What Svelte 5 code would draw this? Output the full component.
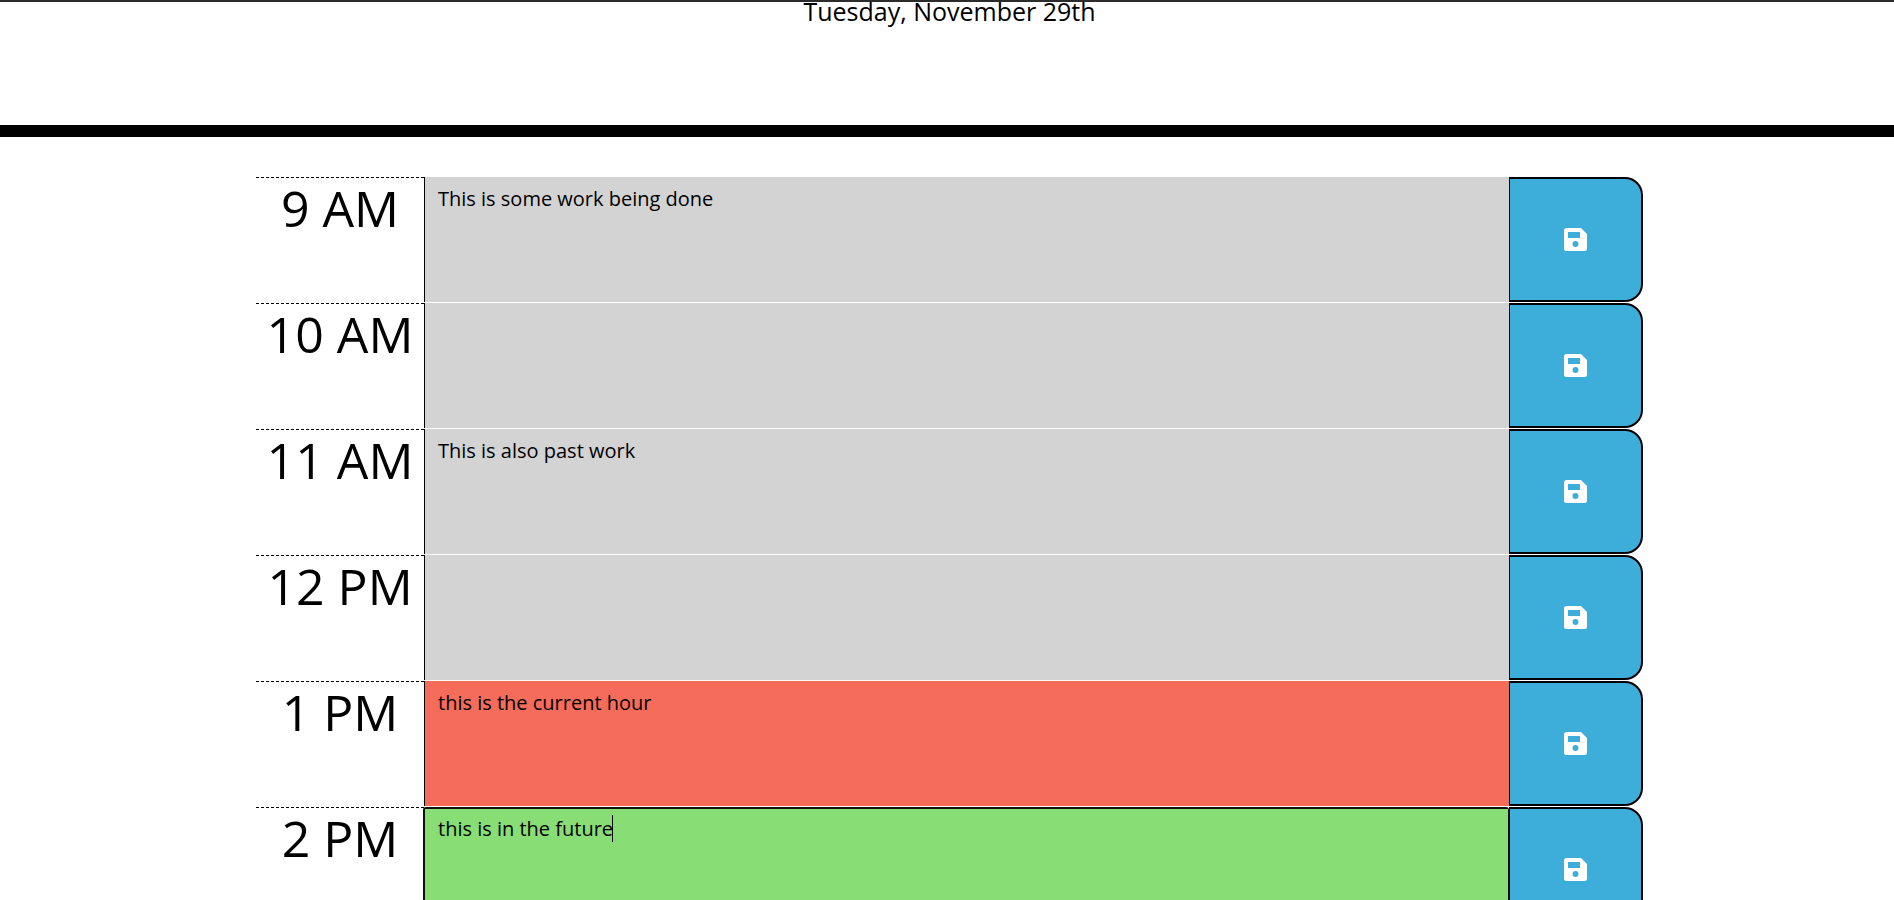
<script>
  const date = 'Tuesday, November 29th';
  let blocks = $state([
    { id: 9, hour: '9 AM', text: 'This is some work being done', when: 'past' },
    { id: 10, hour: '10 AM', text: '', when: 'past' },
    { id: 11, hour: '11 AM', text: 'This is also past work', when: 'past' },
    { id: 12, hour: '12 PM', text: '', when: 'past' },
    { id: 13, hour: '1 PM', text: 'this is the current hour', when: 'present' },
    { id: 14, hour: '2 PM', text: 'this is in the future', when: 'future', active: true }
  ]);
</script>

<header>
  <p>{date}</p>
</header>

<main>
  {#each blocks as block (block.id)}
    <section class="row">
      <label class="hour" for="block-{block.id}">{block.hour}</label>
      <div class="entry" class:active={block.active}>
        <textarea id="block-{block.id}" class={block.when} spellcheck="false" bind:value={block.text}></textarea>
        {#if block.active}<span class="caret"></span>{/if}
      </div>
      <button type="button" aria-label="Save">
        <svg viewBox="0 0 23 23" width="23" height="23" aria-hidden="true">
          <path
            fill="#fff"
            fill-rule="evenodd"
            d="M2.5 0H17L23 6V20.500A2.500 2.500 0 0 1 20.500 23H2.500A2.500 2.500 0 0 1 0 20.500V2.500A2.500 2.500 0 0 1 2.500 0ZM4 4V10H16V4ZM11.500 13A3 3 0 1 0 11.500 19A3 3 0 1 0 11.500 13Z"
          />
        </svg>
      </button>
    </section>
  {/each}
</main>

<style>
  :global(html) {
    scrollbar-width: none;
  }

  :global(body) {
    height: 100vh;
    overflow: hidden;
    background: #fff;
    color: #000;
    font-family: 'Open Sans', sans-serif;
    font-size: 20px;
  }

  header {
    box-sizing: border-box;
    height: 137px;
    padding-left: 5px;
    border-top: 2px solid #2b2b2b;
    border-bottom: 12px solid #000;
    text-align: center;
  }

  header p {
    margin: 0;
    font-size: 25px;
    line-height: 18px;
  }

  main {
    display: flex;
    flex-direction: column;
    gap: 1px;
    padding: 40px 251px 0 256px;
  }

  .row {
    display: grid;
    grid-template-columns: 168px 1fr 134px;
    height: 125px;
  }

  .hour {
    border-top: 1px dashed #000;
    font-size: 50px;
    line-height: 60px;
    text-align: center;
    white-space: nowrap;
  }

  .entry {
    position: relative;
    display: flex;
    border-left: 1px solid #000;
  }

  textarea {
    flex: 1;
    box-sizing: border-box;
    min-width: 0;
    padding: 8px 13px;
    border: 0;
    outline: 0;
    resize: none;
    color: #000;
    font: inherit;
    line-height: 27px;
  }

  .active {
    margin-left: -1px;
    border: 2px solid #101010;
    border-right-width: 1px;
    border-radius: 3px 3px 0 0;
  }

  .active textarea {
    padding-top: 6px;
  }

  .past {
    background: #d3d3d3;
  }

  .present {
    background: #f56c5b;
  }

  .future {
    background: #88dd75;
  }

  .caret {
    position: absolute;
    top: 6px;
    left: 187px;
    width: 1px;
    height: 27px;
    background: #000;
  }

  button {
    display: flex;
    align-items: center;
    justify-content: center;
    padding: 0 1px 0 0;
    border: 2px solid #000;
    border-left-width: 1px;
    border-radius: 0 18px 18px 0;
    background: #3dadd9;
    cursor: pointer;
  }
</style>
